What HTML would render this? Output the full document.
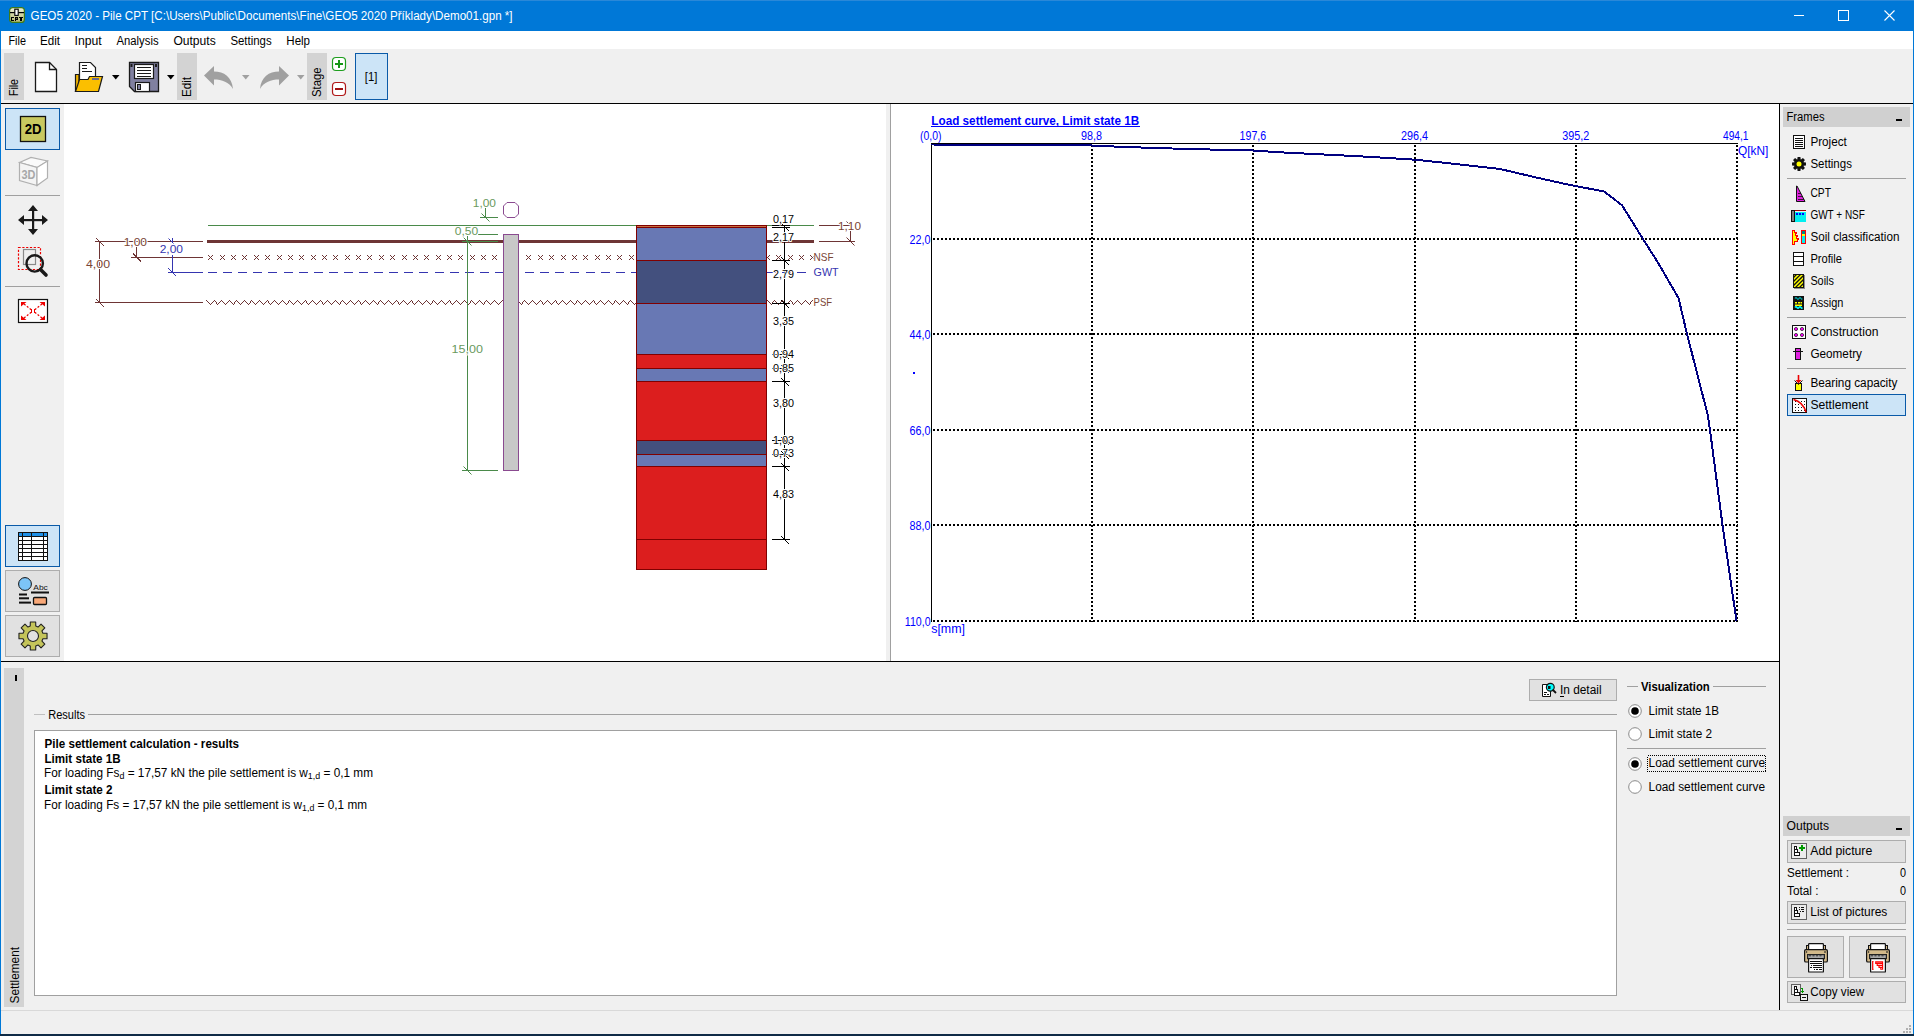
<!DOCTYPE html>
<html><head><meta charset="utf-8"><title>GEO5 2020 - Pile CPT</title>
<style>
html,body{margin:0;padding:0;width:1914px;height:1036px;overflow:hidden;background:#f0f0f0}
svg{display:block;font-family:"Liberation Sans",sans-serif}
</style></head><body>
<svg width="1914" height="1036" viewBox="0 0 1914 1036">
<rect x="0" y="0" width="1914" height="1036" fill="#f0f0f0" />
<rect x="0" y="0" width="1914" height="31" fill="#0078d7" />
<rect x="0" y="0" width="1914" height="1" fill="#2a88d8" />
<defs><linearGradient id="ig" x1="0" y1="0" x2="0" y2="1"><stop offset="0" stop-color="#f0f0dc"/><stop offset="0.45" stop-color="#d4d6a4"/><stop offset="1" stop-color="#b4b872"/></linearGradient></defs>
<g transform="translate(9,7)"><rect x="0.6" y="0.6" width="14.8" height="14.8" rx="3" fill="url(#ig)" stroke="#3e7a1a" stroke-width="1.2"/><rect x="1" y="5" width="14" height="1.2" fill="#000"/><rect x="5.8" y="2.2" width="3.4" height="6.2" fill="#fff" stroke="#000" stroke-width="1.1"/><path d="M2 10h3v1.3h-1.8v1.4h1.8v1.3h-3z M6 10h3v2.6h-1.7v1.4h-1.3z M10 10h4v1.3h-1.3v2.7h-1.4v-2.7h-1.3z" fill="#000" shape-rendering="crispEdges"/><rect x="7.3" y="11" width="0.8" height="0.8" fill="#c8cb8c"/></g>
<text x="30.60" y="20" font-size="12" font-weight="normal" fill="#fff" textLength="482.00" lengthAdjust="spacingAndGlyphs" >GEO5 2020 - Pile CPT [C:\Users\Public\Documents\Fine\GEO5 2020 Příklady\Demo01.gpn *]</text>
<rect x="1794" y="15" width="10" height="1" fill="#fff" />
<rect x="1838.5" y="10.5" width="10" height="10" fill="none" stroke="#fff"/>
<path d="M1884.5 10.5 L1894.5 20.5 M1894.5 10.5 L1884.5 20.5" stroke="#fff" stroke-width="1.1" fill="none"/>
<rect x="0" y="31" width="1" height="1003" fill="#0078d7" />
<rect x="1913" y="31" width="1" height="1003" fill="#0078d7" />
<rect x="0" y="1034" width="1914" height="2" fill="#0f2b46" />
<rect x="1" y="31" width="1912" height="18" fill="#fff" />
<text x="8.50" y="45" font-size="12" font-weight="normal" fill="#000" textLength="17.46" lengthAdjust="spacingAndGlyphs" >File</text>
<text x="40.00" y="45" font-size="12" font-weight="normal" fill="#000" textLength="20.05" lengthAdjust="spacingAndGlyphs" >Edit</text>
<text x="74.50" y="45" font-size="12" font-weight="normal" fill="#000" textLength="27.24" lengthAdjust="spacingAndGlyphs" >Input</text>
<text x="116.50" y="45" font-size="12" font-weight="normal" fill="#000" textLength="42.06" lengthAdjust="spacingAndGlyphs" >Analysis</text>
<text x="173.40" y="45" font-size="12" font-weight="normal" fill="#000" textLength="42.32" lengthAdjust="spacingAndGlyphs" >Outputs</text>
<text x="230.40" y="45" font-size="12" font-weight="normal" fill="#000" textLength="41.29" lengthAdjust="spacingAndGlyphs" >Settings</text>
<text x="286.30" y="45" font-size="12" font-weight="normal" fill="#000" textLength="23.75" lengthAdjust="spacingAndGlyphs" >Help</text>
<rect x="4" y="53" width="20" height="47" fill="#d3d3d3" />
<text transform="translate(18,96) rotate(-90)" x="0.00" y="0" font-size="12" fill="#000" textLength="16.97" lengthAdjust="spacingAndGlyphs">File</text>
<rect x="177" y="53" width="20" height="47" fill="#d3d3d3" />
<text transform="translate(191,97) rotate(-90)" x="0.00" y="0" font-size="12" fill="#000" textLength="20.05" lengthAdjust="spacingAndGlyphs">Edit</text>
<rect x="307" y="53" width="20" height="47" fill="#d3d3d3" />
<text transform="translate(321,97) rotate(-90)" x="0.00" y="0" font-size="12" fill="#000" textLength="29.49" lengthAdjust="spacingAndGlyphs">Stage</text>
<rect x="1" y="103" width="1912" height="1" fill="#000" />
<path d="M35.5 62.5 H49.5 L56.5 69.5 V91.5 H35.5 Z" fill="#fff" stroke="#1a1a1a" stroke-width="1.3"/><path d="M49.5 62.5 V69.5 H56.5" fill="none" stroke="#1a1a1a" stroke-width="1.3"/>
<g><path d="M75.5 74.5 H79 V91.5 H75.5 Z" fill="#f0b400" stroke="#1a1a1a" stroke-width="1.2"/><path d="M79.5 62.5 H90.5 L95.5 67.5 V80 H79.5 Z" fill="#fff" stroke="#1a1a1a" stroke-width="1.2"/><path d="M82 65.5 H87 M82 68.5 H87 M82 71.5 H92" stroke="#1a1a1a" stroke-width="1"/><path d="M75.5 91.5 L79.5 79.5 H88 L89.5 76.5 H102.5 L98.5 91.5 Z" fill="#fbbf00" stroke="#1a1a1a" stroke-width="1.2"/><rect x="92" y="78" width="7" height="2" fill="#6a6a8a"/></g>
<path d="M112 75 H119.5 L115.75 79.5 Z" fill="#000"/>
<path d="M129.5 62.5 H158.5 V91.5 H134.5 L129.5 86.5 Z" fill="#8080a0" stroke="#1a1a1a" stroke-width="1.3"/><rect x="134.5" y="64.5" width="19" height="14" fill="#fff" stroke="#1a1a1a" stroke-width="1.2"/><path d="M137 67.5 H151 M137 70.5 H151 M137 73.5 H151 M137 76.5 H151" stroke="#1a1a1a" stroke-width="1"/><rect x="135.5" y="82.5" width="14" height="9" fill="#fff" stroke="#1a1a1a" stroke-width="1.2"/><rect x="137.5" y="84.5" width="3" height="5" fill="#8080a0" stroke="#1a1a1a" stroke-width="1"/><rect x="130.5" y="64" width="2" height="3" fill="#1a1a1a"/><rect x="155" y="64" width="2" height="3" fill="#1a1a1a"/>
<path d="M167 75 H174.5 L170.75 79.5 Z" fill="#000"/>
<path d="M204 75.5 L214 66 V71.5 C224 71.5 232 77 233 89 C229 82 222 79.5 214 79.5 V85.5 Z" fill="#a0a0a0"/>
<path d="M242 75 H249.5 L245.75 79.5 Z" fill="#a0a0a0"/>
<path d="M289 75.5 L279 66 V71.5 C269 71.5 261 77 260 89 C264 82 271 79.5 279 79.5 V85.5 Z" fill="#a0a0a0"/>
<path d="M297 75 H304.5 L300.75 79.5 Z" fill="#a0a0a0"/>
<rect x="332.5" y="57.5" width="13" height="13" rx="3.5" fill="#fff" stroke="#1e9e1e" stroke-width="1.2"/><path d="M339 60 V68 M335 64 H343" stroke="#149614" stroke-width="2"/>
<rect x="332.5" y="82.5" width="13" height="13" rx="3.5" fill="#fff" stroke="#b01818" stroke-width="1.2"/><path d="M335 89 H343" stroke="#a01010" stroke-width="2"/>
<rect x="355.5" y="53.5" width="32" height="46" fill="#cce4f7" stroke="#0a5aa8" stroke-width="1" />
<text x="364.80" y="81" font-size="12" font-weight="normal" fill="#000" textLength="12.57" lengthAdjust="spacingAndGlyphs" >[1]</text>
<rect x="64" y="104" width="822" height="557" fill="#fff" />
<rect x="886" y="105" width="4" height="556" fill="#f0f0f0" />
<rect x="890" y="104" width="1" height="557" fill="#a0a0a0" />
<rect x="891" y="104" width="888" height="557" fill="#fff" />
<rect x="1779" y="104" width="1" height="906" fill="#000" />
<rect x="1" y="661" width="1778" height="1" fill="#000" />
<rect x="5.5" y="108.5" width="54" height="41" fill="#cce4f7" stroke="#0a5aa8" stroke-width="1" />
<rect x="20.5" y="116.5" width="25" height="25" fill="#c9c960" stroke="#111" stroke-width="1.3"/>
<text x="24.80" y="134" font-size="14" font-weight="bold" fill="#000" textLength="16.82" lengthAdjust="spacingAndGlyphs" >2D</text>
<g fill="none" stroke="#b0b0b0" stroke-width="1.2"><path d="M19.5 162.5 L31 157.5 L47.5 161 L37.5 167.5 Z" fill="#fafafa"/><path d="M19.5 162.5 V180.5 L37 185.5 V167.5 Z" fill="#f4f4f4"/><path d="M37 167.5 L47.5 161 V178 L37 185.5 Z" fill="#fff"/></g>
<text x="21.50" y="179" font-size="12" font-weight="bold" fill="#a8a8a8" textLength="13.97" lengthAdjust="spacingAndGlyphs" >3D</text>
<rect x="5" y="195" width="55" height="1" fill="#a0a0a0" />
<g fill="#1a1a1a"><path d="M33 205 L28 211 H38 Z M33 235 L28 229 H38 Z M18 220 L24 215 V225 Z M48 220 L42 215 V225 Z"/><rect x="32" y="210" width="2.2" height="20"/><rect x="23" y="219" width="20" height="2.2"/></g>
<rect x="18.5" y="247.5" width="22" height="22" fill="none" stroke="#e00" stroke-width="1.2" stroke-dasharray="2.2,1.6"/><rect x="23.5" y="249.5" width="12" height="15" fill="none" stroke="#8a8a8a" stroke-width="1.2"/><circle cx="34.7" cy="263.4" r="8.2" fill="none" stroke="#1a1a1a" stroke-width="2.4"/><path d="M40.5 269.5 L46 275" stroke="#1a1a1a" stroke-width="3.6" stroke-linecap="round"/>
<rect x="5" y="286" width="55" height="1" fill="#a0a0a0" />
<rect x="18.5" y="299.5" width="29" height="23" fill="#fff" stroke="#111" stroke-width="1.2"/><path d="M24 304 L31 309.5 M42 304 L35 309.5 M24 318 L31 312.5 M42 318 L35 312.5" stroke="#e00" stroke-width="1.2" stroke-dasharray="2,1.6"/><path d="M21 302 L26.5 302 L21 306.5 Z M45 302 L39.5 302 L45 306.5 Z M21 320 L26.5 320 L21 315.5 Z M45 320 L39.5 320 L45 315.5 Z" fill="#e00"/><path d="M31.5 309 V313 M34.5 309 V313 M30.5 309.5 H32 M30.5 312.5 H32 M34 309.5 H35.5 M34 312.5 H35.5" stroke="#e00" stroke-width="1"/>
<rect x="5.5" y="525.5" width="54" height="41" fill="#cce4f7" stroke="#0a5aa8" stroke-width="1" />
<rect x="18.5" y="532.5" width="29" height="28" fill="#fff" stroke="#111" stroke-width="1"/><rect x="19" y="533" width="28" height="3" fill="#1e90e8"/>
<path d="M19 536.5 H47" stroke="#111" stroke-width="1"/>
<path d="M19 540.5 H47" stroke="#111" stroke-width="1"/>
<path d="M19 544.5 H47" stroke="#111" stroke-width="1"/>
<path d="M19 548.5 H47" stroke="#111" stroke-width="1"/>
<path d="M19 552.5 H47" stroke="#111" stroke-width="1"/>
<path d="M19 556.5 H47" stroke="#111" stroke-width="1"/>
<path d="M22.5 533 V560 M31.5 533 V560 M43.5 533 V560" stroke="#111" stroke-width="1"/>
<rect x="5.5" y="570.5" width="54" height="41" fill="#e1e1e1" stroke="#adadad" stroke-width="1" />
<circle cx="25" cy="584" r="6.4" fill="#7cc4f8" stroke="#111" stroke-width="1"/><text x="33.3" y="589.5" font-size="8" fill="#111" textLength="14.5" lengthAdjust="spacingAndGlyphs">Abc</text><rect x="31" y="591.5" width="18" height="2" fill="#111"/><rect x="19" y="593.5" width="8" height="2" fill="#111"/><rect x="19" y="597.3" width="10" height="2" fill="#111"/><rect x="19" y="601.6" width="12" height="2" fill="#111"/><rect x="33.5" y="597.5" width="13" height="7" rx="1" fill="#f8a878" stroke="#111" stroke-width="1.3"/>
<rect x="5.5" y="615.5" width="54" height="41" fill="#e1e1e1" stroke="#adadad" stroke-width="1" />
<polygon points="42.93,633.25 47.04,633.30 47.04,638.70 42.93,638.75 41.96,641.08 44.84,644.02 41.02,647.84 38.08,644.96 35.75,645.93 35.70,650.04 30.30,650.04 30.25,645.93 27.92,644.96 24.98,647.84 21.16,644.02 24.04,641.08 23.07,638.75 18.96,638.70 18.96,633.30 23.07,633.25 24.04,630.92 21.16,627.98 24.98,624.16 27.92,627.04 30.25,626.07 30.30,621.96 35.70,621.96 35.75,626.07 38.08,627.04 41.02,624.16 44.84,627.98 41.96,630.92" fill="#c4c45a" stroke="#222" stroke-width="1.1" stroke-linejoin="round"/><circle cx="33" cy="636" r="5.5" fill="#e1e1e1" stroke="#222" stroke-width="1.1"/>
<g shape-rendering="crispEdges">
<rect x="95" y="241" width="108" height="1" fill="#6e3535" />
<rect x="131" y="257" width="72" height="1" fill="#6e3535" />
<rect x="168" y="272" width="35" height="1" fill="#3535b0" />
<rect x="95" y="302" width="108" height="1" fill="#6e3535" />
<rect x="99" y="241" width="1" height="62" fill="#6e3535" />
<rect x="136" y="247" width="1" height="11" fill="#6e3535" />
<rect x="172" y="255" width="1" height="18" fill="#3535b0" />
<rect x="172" y="238" width="1" height="5" fill="#3535b0" />
</g>
<path d="M96.0 238.0 L104.0 246.0" stroke="#6e3535" stroke-width="1" fill="none" shape-rendering="crispEdges"/>
<path d="M96.0 299.0 L104.0 307.0" stroke="#6e3535" stroke-width="1" fill="none" shape-rendering="crispEdges"/>
<path d="M133.0 253.5 L141.0 261.5" stroke="#6e3535" stroke-width="1" fill="none" shape-rendering="crispEdges"/>
<path d="M168.5 268.5 L176.5 276.5" stroke="#3535b0" stroke-width="1" fill="none" shape-rendering="crispEdges"/>
<path d="M168.5 238.5 L173.5 243.5" stroke="#3535b0" stroke-width="1"/>
<text x="86.00" y="268" font-size="11.5" font-weight="normal" fill="#7a4535" textLength="24.01" lengthAdjust="spacingAndGlyphs" stroke="#fff" stroke-width="2" paint-order="stroke" stroke-linejoin="round">4,00</text>
<text x="123.70" y="245.6" font-size="11.5" font-weight="normal" fill="#7a4535" textLength="23.31" lengthAdjust="spacingAndGlyphs" stroke="#fff" stroke-width="2" paint-order="stroke" stroke-linejoin="round">1,00</text>
<text x="159.70" y="253.4" font-size="11.5" font-weight="normal" fill="#3535b0" textLength="23.31" lengthAdjust="spacingAndGlyphs" stroke="#fff" stroke-width="2" paint-order="stroke" stroke-linejoin="round">2,00</text>
<g shape-rendering="crispEdges">
<rect x="208" y="225" width="606" height="1" fill="#4a8a4a" />
</g>
<path d="M208 255h1v1h-1z M212 255h1v1h-1z M209 256h1v1h-1z M211 256h1v1h-1z M210 257h1v1h-1z M209 258h1v1h-1z M211 258h1v1h-1z M208 259h1v1h-1z M212 259h1v1h-1z M220 255h1v1h-1z M224 255h1v1h-1z M221 256h1v1h-1z M223 256h1v1h-1z M222 257h1v1h-1z M221 258h1v1h-1z M223 258h1v1h-1z M220 259h1v1h-1z M224 259h1v1h-1z M231 255h1v1h-1z M235 255h1v1h-1z M232 256h1v1h-1z M234 256h1v1h-1z M233 257h1v1h-1z M232 258h1v1h-1z M234 258h1v1h-1z M231 259h1v1h-1z M235 259h1v1h-1z M242 255h1v1h-1z M246 255h1v1h-1z M243 256h1v1h-1z M245 256h1v1h-1z M244 257h1v1h-1z M243 258h1v1h-1z M245 258h1v1h-1z M242 259h1v1h-1z M246 259h1v1h-1z M254 255h1v1h-1z M258 255h1v1h-1z M255 256h1v1h-1z M257 256h1v1h-1z M256 257h1v1h-1z M255 258h1v1h-1z M257 258h1v1h-1z M254 259h1v1h-1z M258 259h1v1h-1z M265 255h1v1h-1z M269 255h1v1h-1z M266 256h1v1h-1z M268 256h1v1h-1z M267 257h1v1h-1z M266 258h1v1h-1z M268 258h1v1h-1z M265 259h1v1h-1z M269 259h1v1h-1z M277 255h1v1h-1z M281 255h1v1h-1z M278 256h1v1h-1z M280 256h1v1h-1z M279 257h1v1h-1z M278 258h1v1h-1z M280 258h1v1h-1z M277 259h1v1h-1z M281 259h1v1h-1z M288 255h1v1h-1z M292 255h1v1h-1z M289 256h1v1h-1z M291 256h1v1h-1z M290 257h1v1h-1z M289 258h1v1h-1z M291 258h1v1h-1z M288 259h1v1h-1z M292 259h1v1h-1z M299 255h1v1h-1z M303 255h1v1h-1z M300 256h1v1h-1z M302 256h1v1h-1z M301 257h1v1h-1z M300 258h1v1h-1z M302 258h1v1h-1z M299 259h1v1h-1z M303 259h1v1h-1z M311 255h1v1h-1z M315 255h1v1h-1z M312 256h1v1h-1z M314 256h1v1h-1z M313 257h1v1h-1z M312 258h1v1h-1z M314 258h1v1h-1z M311 259h1v1h-1z M315 259h1v1h-1z M322 255h1v1h-1z M326 255h1v1h-1z M323 256h1v1h-1z M325 256h1v1h-1z M324 257h1v1h-1z M323 258h1v1h-1z M325 258h1v1h-1z M322 259h1v1h-1z M326 259h1v1h-1z M333 255h1v1h-1z M337 255h1v1h-1z M334 256h1v1h-1z M336 256h1v1h-1z M335 257h1v1h-1z M334 258h1v1h-1z M336 258h1v1h-1z M333 259h1v1h-1z M337 259h1v1h-1z M345 255h1v1h-1z M349 255h1v1h-1z M346 256h1v1h-1z M348 256h1v1h-1z M347 257h1v1h-1z M346 258h1v1h-1z M348 258h1v1h-1z M345 259h1v1h-1z M349 259h1v1h-1z M356 255h1v1h-1z M360 255h1v1h-1z M357 256h1v1h-1z M359 256h1v1h-1z M358 257h1v1h-1z M357 258h1v1h-1z M359 258h1v1h-1z M356 259h1v1h-1z M360 259h1v1h-1z M367 255h1v1h-1z M371 255h1v1h-1z M368 256h1v1h-1z M370 256h1v1h-1z M369 257h1v1h-1z M368 258h1v1h-1z M370 258h1v1h-1z M367 259h1v1h-1z M371 259h1v1h-1z M379 255h1v1h-1z M383 255h1v1h-1z M380 256h1v1h-1z M382 256h1v1h-1z M381 257h1v1h-1z M380 258h1v1h-1z M382 258h1v1h-1z M379 259h1v1h-1z M383 259h1v1h-1z M390 255h1v1h-1z M394 255h1v1h-1z M391 256h1v1h-1z M393 256h1v1h-1z M392 257h1v1h-1z M391 258h1v1h-1z M393 258h1v1h-1z M390 259h1v1h-1z M394 259h1v1h-1z M402 255h1v1h-1z M406 255h1v1h-1z M403 256h1v1h-1z M405 256h1v1h-1z M404 257h1v1h-1z M403 258h1v1h-1z M405 258h1v1h-1z M402 259h1v1h-1z M406 259h1v1h-1z M413 255h1v1h-1z M417 255h1v1h-1z M414 256h1v1h-1z M416 256h1v1h-1z M415 257h1v1h-1z M414 258h1v1h-1z M416 258h1v1h-1z M413 259h1v1h-1z M417 259h1v1h-1z M424 255h1v1h-1z M428 255h1v1h-1z M425 256h1v1h-1z M427 256h1v1h-1z M426 257h1v1h-1z M425 258h1v1h-1z M427 258h1v1h-1z M424 259h1v1h-1z M428 259h1v1h-1z M436 255h1v1h-1z M440 255h1v1h-1z M437 256h1v1h-1z M439 256h1v1h-1z M438 257h1v1h-1z M437 258h1v1h-1z M439 258h1v1h-1z M436 259h1v1h-1z M440 259h1v1h-1z M447 255h1v1h-1z M451 255h1v1h-1z M448 256h1v1h-1z M450 256h1v1h-1z M449 257h1v1h-1z M448 258h1v1h-1z M450 258h1v1h-1z M447 259h1v1h-1z M451 259h1v1h-1z M458 255h1v1h-1z M462 255h1v1h-1z M459 256h1v1h-1z M461 256h1v1h-1z M460 257h1v1h-1z M459 258h1v1h-1z M461 258h1v1h-1z M458 259h1v1h-1z M462 259h1v1h-1z M470 255h1v1h-1z M474 255h1v1h-1z M471 256h1v1h-1z M473 256h1v1h-1z M472 257h1v1h-1z M471 258h1v1h-1z M473 258h1v1h-1z M470 259h1v1h-1z M474 259h1v1h-1z M481 255h1v1h-1z M485 255h1v1h-1z M482 256h1v1h-1z M484 256h1v1h-1z M483 257h1v1h-1z M482 258h1v1h-1z M484 258h1v1h-1z M481 259h1v1h-1z M485 259h1v1h-1z M492 255h1v1h-1z M496 255h1v1h-1z M493 256h1v1h-1z M495 256h1v1h-1z M494 257h1v1h-1z M493 258h1v1h-1z M495 258h1v1h-1z M492 259h1v1h-1z M496 259h1v1h-1z M526 255h1v1h-1z M530 255h1v1h-1z M527 256h1v1h-1z M529 256h1v1h-1z M528 257h1v1h-1z M527 258h1v1h-1z M529 258h1v1h-1z M526 259h1v1h-1z M530 259h1v1h-1z M538 255h1v1h-1z M542 255h1v1h-1z M539 256h1v1h-1z M541 256h1v1h-1z M540 257h1v1h-1z M539 258h1v1h-1z M541 258h1v1h-1z M538 259h1v1h-1z M542 259h1v1h-1z M549 255h1v1h-1z M553 255h1v1h-1z M550 256h1v1h-1z M552 256h1v1h-1z M551 257h1v1h-1z M550 258h1v1h-1z M552 258h1v1h-1z M549 259h1v1h-1z M553 259h1v1h-1z M561 255h1v1h-1z M565 255h1v1h-1z M562 256h1v1h-1z M564 256h1v1h-1z M563 257h1v1h-1z M562 258h1v1h-1z M564 258h1v1h-1z M561 259h1v1h-1z M565 259h1v1h-1z M572 255h1v1h-1z M576 255h1v1h-1z M573 256h1v1h-1z M575 256h1v1h-1z M574 257h1v1h-1z M573 258h1v1h-1z M575 258h1v1h-1z M572 259h1v1h-1z M576 259h1v1h-1z M583 255h1v1h-1z M587 255h1v1h-1z M584 256h1v1h-1z M586 256h1v1h-1z M585 257h1v1h-1z M584 258h1v1h-1z M586 258h1v1h-1z M583 259h1v1h-1z M587 259h1v1h-1z M595 255h1v1h-1z M599 255h1v1h-1z M596 256h1v1h-1z M598 256h1v1h-1z M597 257h1v1h-1z M596 258h1v1h-1z M598 258h1v1h-1z M595 259h1v1h-1z M599 259h1v1h-1z M606 255h1v1h-1z M610 255h1v1h-1z M607 256h1v1h-1z M609 256h1v1h-1z M608 257h1v1h-1z M607 258h1v1h-1z M609 258h1v1h-1z M606 259h1v1h-1z M610 259h1v1h-1z M617 255h1v1h-1z M621 255h1v1h-1z M618 256h1v1h-1z M620 256h1v1h-1z M619 257h1v1h-1z M618 258h1v1h-1z M620 258h1v1h-1z M617 259h1v1h-1z M621 259h1v1h-1z M629 255h1v1h-1z M633 255h1v1h-1z M630 256h1v1h-1z M632 256h1v1h-1z M631 257h1v1h-1z M630 258h1v1h-1z M632 258h1v1h-1z M629 259h1v1h-1z M633 259h1v1h-1z M640 255h1v1h-1z M644 255h1v1h-1z M641 256h1v1h-1z M643 256h1v1h-1z M642 257h1v1h-1z M641 258h1v1h-1z M643 258h1v1h-1z M640 259h1v1h-1z M644 259h1v1h-1z M651 255h1v1h-1z M655 255h1v1h-1z M652 256h1v1h-1z M654 256h1v1h-1z M653 257h1v1h-1z M652 258h1v1h-1z M654 258h1v1h-1z M651 259h1v1h-1z M655 259h1v1h-1z M663 255h1v1h-1z M667 255h1v1h-1z M664 256h1v1h-1z M666 256h1v1h-1z M665 257h1v1h-1z M664 258h1v1h-1z M666 258h1v1h-1z M663 259h1v1h-1z M667 259h1v1h-1z M674 255h1v1h-1z M678 255h1v1h-1z M675 256h1v1h-1z M677 256h1v1h-1z M676 257h1v1h-1z M675 258h1v1h-1z M677 258h1v1h-1z M674 259h1v1h-1z M678 259h1v1h-1z M686 255h1v1h-1z M690 255h1v1h-1z M687 256h1v1h-1z M689 256h1v1h-1z M688 257h1v1h-1z M687 258h1v1h-1z M689 258h1v1h-1z M686 259h1v1h-1z M690 259h1v1h-1z M697 255h1v1h-1z M701 255h1v1h-1z M698 256h1v1h-1z M700 256h1v1h-1z M699 257h1v1h-1z M698 258h1v1h-1z M700 258h1v1h-1z M697 259h1v1h-1z M701 259h1v1h-1z M708 255h1v1h-1z M712 255h1v1h-1z M709 256h1v1h-1z M711 256h1v1h-1z M710 257h1v1h-1z M709 258h1v1h-1z M711 258h1v1h-1z M708 259h1v1h-1z M712 259h1v1h-1z M720 255h1v1h-1z M724 255h1v1h-1z M721 256h1v1h-1z M723 256h1v1h-1z M722 257h1v1h-1z M721 258h1v1h-1z M723 258h1v1h-1z M720 259h1v1h-1z M724 259h1v1h-1z M731 255h1v1h-1z M735 255h1v1h-1z M732 256h1v1h-1z M734 256h1v1h-1z M733 257h1v1h-1z M732 258h1v1h-1z M734 258h1v1h-1z M731 259h1v1h-1z M735 259h1v1h-1z M742 255h1v1h-1z M746 255h1v1h-1z M743 256h1v1h-1z M745 256h1v1h-1z M744 257h1v1h-1z M743 258h1v1h-1z M745 258h1v1h-1z M742 259h1v1h-1z M746 259h1v1h-1z M754 255h1v1h-1z M758 255h1v1h-1z M755 256h1v1h-1z M757 256h1v1h-1z M756 257h1v1h-1z M755 258h1v1h-1z M757 258h1v1h-1z M754 259h1v1h-1z M758 259h1v1h-1z M765 255h1v1h-1z M769 255h1v1h-1z M766 256h1v1h-1z M768 256h1v1h-1z M767 257h1v1h-1z M766 258h1v1h-1z M768 258h1v1h-1z M765 259h1v1h-1z M769 259h1v1h-1z M776 255h1v1h-1z M780 255h1v1h-1z M777 256h1v1h-1z M779 256h1v1h-1z M778 257h1v1h-1z M777 258h1v1h-1z M779 258h1v1h-1z M776 259h1v1h-1z M780 259h1v1h-1z M788 255h1v1h-1z M792 255h1v1h-1z M789 256h1v1h-1z M791 256h1v1h-1z M790 257h1v1h-1z M789 258h1v1h-1z M791 258h1v1h-1z M788 259h1v1h-1z M792 259h1v1h-1z M799 255h1v1h-1z M803 255h1v1h-1z M800 256h1v1h-1z M802 256h1v1h-1z M801 257h1v1h-1z M800 258h1v1h-1z M802 258h1v1h-1z M799 259h1v1h-1z M803 259h1v1h-1z M810 255h1v1h-1z M814 255h1v1h-1z M811 256h1v1h-1z M813 256h1v1h-1z M812 257h1v1h-1z M811 258h1v1h-1z M813 258h1v1h-1z M810 259h1v1h-1z M814 259h1v1h-1z" fill="#6e3535" shape-rendering="crispEdges"/>
<path d="M208 272.5 H217 M223.1 272.5 H232.1 M238.2 272.5 H247.2 M253.29999999999998 272.5 H262.29999999999995 M268.4 272.5 H277.4 M283.5 272.5 H292.5 M298.6 272.5 H307.6 M313.70000000000005 272.5 H322.70000000000005 M328.80000000000007 272.5 H337.80000000000007 M343.9000000000001 272.5 H352.9000000000001 M359.0000000000001 272.5 H368.0000000000001 M374.10000000000014 272.5 H383.10000000000014 M389.20000000000016 272.5 H398.20000000000016 M404.3000000000002 272.5 H413.3000000000002 M419.4000000000002 272.5 H428.4000000000002 M434.5000000000002 272.5 H443.5000000000002 M449.60000000000025 272.5 H458.60000000000025 M464.7000000000003 272.5 H473.7000000000003 M479.8000000000003 272.5 H488.8000000000003 M494.9000000000003 272.5 H503.9000000000003 M510.00000000000034 272.5 H519.0000000000003 M525.1000000000004 272.5 H534.1000000000004 M540.2000000000004 272.5 H549.2000000000004 M555.3000000000004 272.5 H564.3000000000004 M570.4000000000004 272.5 H579.4000000000004 M585.5000000000005 272.5 H594.5000000000005 M600.6000000000005 272.5 H609.6000000000005 M615.7000000000005 272.5 H624.7000000000005 M630.8000000000005 272.5 H639.8000000000005 M645.9000000000005 272.5 H654.9000000000005 M661.0000000000006 272.5 H670.0000000000006 M676.1000000000006 272.5 H685.1000000000006 M691.2000000000006 272.5 H700.2000000000006 M706.3000000000006 272.5 H715.3000000000006 M721.4000000000007 272.5 H730.4000000000007 M736.5000000000007 272.5 H745.5000000000007 M751.6000000000007 272.5 H760.6000000000007 M766.7000000000007 272.5 H775.7000000000007 M781.8000000000008 272.5 H790.8000000000008 M796.9000000000008 272.5 H805.9000000000008" stroke="#3535b0" stroke-width="1.3" fill="none" shape-rendering="crispEdges"/>
<path d="M206 300h1v1h-1z M207 301h1v1h-1z M208 302h1v1h-1z M209 303h1v1h-1z M210 304h1v1h-1z M211 303h1v1h-1z M212 302h1v1h-1z M213 301h1v1h-1z M214 300h1v1h-1z M215 301h1v1h-1z M216 302h1v1h-1z M216 303h1v1h-1z M217 304h1v1h-1z M218 303h1v1h-1z M219 302h1v1h-1z M220 301h1v1h-1z M221 300h1v1h-1z M222 301h1v1h-1z M223 302h1v1h-1z M224 303h1v1h-1z M225 304h1v1h-1z M226 303h1v1h-1z M227 302h1v1h-1z M228 301h1v1h-1z M229 300h1v1h-1z M230 301h1v1h-1z M231 302h1v1h-1z M232 303h1v1h-1z M233 304h1v1h-1z M234 302h1v1h-1z M234 303h1v1h-1z M235 301h1v1h-1z M236 300h1v1h-1z M237 301h1v1h-1z M238 302h1v1h-1z M239 303h1v1h-1z M240 304h1v1h-1z M241 303h1v1h-1z M242 302h1v1h-1z M243 301h1v1h-1z M244 300h1v1h-1z M245 301h1v1h-1z M246 302h1v1h-1z M247 303h1v1h-1z M248 304h1v1h-1z M249 303h1v1h-1z M250 301h1v1h-1z M250 302h1v1h-1z M251 300h1v1h-1z M252 301h1v1h-1z M253 302h1v1h-1z M254 303h1v1h-1z M255 304h1v1h-1z M256 303h1v1h-1z M257 302h1v1h-1z M258 301h1v1h-1z M259 300h1v1h-1z M260 301h1v1h-1z M261 302h1v1h-1z M262 303h1v1h-1z M263 304h1v1h-1z M264 303h1v1h-1z M265 302h1v1h-1z M266 301h1v1h-1z M267 300h1v1h-1z M268 301h1v1h-1z M268 302h1v1h-1z M269 303h1v1h-1z M270 304h1v1h-1z M271 303h1v1h-1z M272 302h1v1h-1z M273 301h1v1h-1z M274 300h1v1h-1z M275 301h1v1h-1z M276 302h1v1h-1z M277 303h1v1h-1z M278 304h1v1h-1z M279 303h1v1h-1z M280 302h1v1h-1z M281 301h1v1h-1z M282 300h1v1h-1z M283 301h1v1h-1z M284 302h1v1h-1z M285 303h1v1h-1z M286 304h1v1h-1z M287 303h1v1h-1z M288 301h1v1h-1z M288 302h1v1h-1z M289 300h1v1h-1z M290 301h1v1h-1z M291 302h1v1h-1z M292 303h1v1h-1z M293 304h1v1h-1z M294 303h1v1h-1z M295 302h1v1h-1z M296 301h1v1h-1z M297 300h1v1h-1z M298 301h1v1h-1z M299 302h1v1h-1z M300 303h1v1h-1z M301 304h1v1h-1z M302 303h1v1h-1z M303 302h1v1h-1z M304 301h1v1h-1z M305 300h1v1h-1z M306 301h1v1h-1z M306 302h1v1h-1z M307 303h1v1h-1z M308 304h1v1h-1z M309 303h1v1h-1z M310 302h1v1h-1z M311 301h1v1h-1z M312 300h1v1h-1z M313 301h1v1h-1z M314 302h1v1h-1z M315 303h1v1h-1z M316 304h1v1h-1z M317 303h1v1h-1z M318 302h1v1h-1z M319 301h1v1h-1z M320 300h1v1h-1z M321 301h1v1h-1z M322 302h1v1h-1z M322 303h1v1h-1z M323 304h1v1h-1z M324 303h1v1h-1z M325 302h1v1h-1z M326 301h1v1h-1z M327 300h1v1h-1z M328 301h1v1h-1z M329 302h1v1h-1z M330 303h1v1h-1z M331 304h1v1h-1z M332 303h1v1h-1z M333 302h1v1h-1z M334 301h1v1h-1z M335 300h1v1h-1z M336 301h1v1h-1z M337 302h1v1h-1z M338 303h1v1h-1z M339 304h1v1h-1z M340 302h1v1h-1z M340 303h1v1h-1z M341 301h1v1h-1z M342 300h1v1h-1z M343 301h1v1h-1z M344 302h1v1h-1z M345 303h1v1h-1z M346 304h1v1h-1z M347 303h1v1h-1z M348 302h1v1h-1z M349 301h1v1h-1z M350 300h1v1h-1z M351 301h1v1h-1z M352 302h1v1h-1z M353 303h1v1h-1z M354 304h1v1h-1z M355 303h1v1h-1z M356 302h1v1h-1z M357 301h1v1h-1z M358 300h1v1h-1z M359 301h1v1h-1z M360 302h1v1h-1z M360 303h1v1h-1z M361 304h1v1h-1z M362 303h1v1h-1z M363 302h1v1h-1z M364 301h1v1h-1z M365 300h1v1h-1z M366 301h1v1h-1z M367 302h1v1h-1z M368 303h1v1h-1z M369 304h1v1h-1z M370 303h1v1h-1z M371 302h1v1h-1z M372 301h1v1h-1z M373 300h1v1h-1z M374 301h1v1h-1z M375 302h1v1h-1z M376 303h1v1h-1z M377 304h1v1h-1z M378 302h1v1h-1z M378 303h1v1h-1z M379 301h1v1h-1z M380 300h1v1h-1z M381 301h1v1h-1z M382 302h1v1h-1z M383 303h1v1h-1z M384 304h1v1h-1z M385 303h1v1h-1z M386 302h1v1h-1z M387 301h1v1h-1z M388 300h1v1h-1z M389 301h1v1h-1z M390 302h1v1h-1z M391 303h1v1h-1z M392 304h1v1h-1z M393 303h1v1h-1z M394 302h1v1h-1z M395 301h1v1h-1z M396 300h1v1h-1z M397 301h1v1h-1z M398 302h1v1h-1z M398 303h1v1h-1z M399 304h1v1h-1z M400 303h1v1h-1z M401 302h1v1h-1z M402 301h1v1h-1z M403 300h1v1h-1z M404 301h1v1h-1z M405 302h1v1h-1z M406 303h1v1h-1z M407 304h1v1h-1z M408 303h1v1h-1z M409 302h1v1h-1z M410 301h1v1h-1z M411 300h1v1h-1z M412 301h1v1h-1z M412 302h1v1h-1z M413 303h1v1h-1z M414 304h1v1h-1z M415 303h1v1h-1z M416 302h1v1h-1z M417 301h1v1h-1z M418 300h1v1h-1z M419 301h1v1h-1z M420 302h1v1h-1z M421 303h1v1h-1z M422 304h1v1h-1z M423 303h1v1h-1z M424 302h1v1h-1z M425 301h1v1h-1z M426 300h1v1h-1z M427 301h1v1h-1z M428 302h1v1h-1z M429 303h1v1h-1z M430 304h1v1h-1z M431 303h1v1h-1z M432 301h1v1h-1z M432 302h1v1h-1z M433 300h1v1h-1z M434 301h1v1h-1z M435 302h1v1h-1z M436 303h1v1h-1z M437 304h1v1h-1z M438 303h1v1h-1z M439 302h1v1h-1z M440 301h1v1h-1z M441 300h1v1h-1z M442 301h1v1h-1z M443 302h1v1h-1z M444 303h1v1h-1z M445 304h1v1h-1z M446 303h1v1h-1z M447 302h1v1h-1z M448 301h1v1h-1z M449 300h1v1h-1z M450 301h1v1h-1z M450 302h1v1h-1z M451 303h1v1h-1z M452 304h1v1h-1z M453 303h1v1h-1z M454 302h1v1h-1z M455 301h1v1h-1z M456 300h1v1h-1z M457 301h1v1h-1z M458 302h1v1h-1z M459 303h1v1h-1z M460 304h1v1h-1z M461 303h1v1h-1z M462 302h1v1h-1z M463 301h1v1h-1z M464 300h1v1h-1z M465 301h1v1h-1z M466 302h1v1h-1z M467 303h1v1h-1z M468 304h1v1h-1z M469 303h1v1h-1z M470 301h1v1h-1z M470 302h1v1h-1z M471 300h1v1h-1z M472 301h1v1h-1z M473 302h1v1h-1z M474 303h1v1h-1z M475 304h1v1h-1z M476 303h1v1h-1z M477 302h1v1h-1z M478 301h1v1h-1z M479 300h1v1h-1z M480 301h1v1h-1z M481 302h1v1h-1z M482 303h1v1h-1z M483 304h1v1h-1z M484 302h1v1h-1z M484 303h1v1h-1z M485 301h1v1h-1z M486 300h1v1h-1z M487 301h1v1h-1z M488 302h1v1h-1z M489 303h1v1h-1z M490 304h1v1h-1z M491 303h1v1h-1z M492 302h1v1h-1z M493 301h1v1h-1z M494 300h1v1h-1z M495 301h1v1h-1z M496 302h1v1h-1z M497 303h1v1h-1z M498 304h1v1h-1z M499 303h1v1h-1z M500 302h1v1h-1z M501 301h1v1h-1z M502 300h1v1h-1z M503 301h1v1h-1z M504 302h1v1h-1z M504 303h1v1h-1z M505 304h1v1h-1z M506 303h1v1h-1z M507 302h1v1h-1z M508 301h1v1h-1z M509 300h1v1h-1z M510 301h1v1h-1z M511 302h1v1h-1z M512 303h1v1h-1z M513 304h1v1h-1z M514 303h1v1h-1z M515 302h1v1h-1z M516 301h1v1h-1z M517 300h1v1h-1z M518 301h1v1h-1z M519 302h1v1h-1z M520 303h1v1h-1z M521 304h1v1h-1z M522 302h1v1h-1z M522 303h1v1h-1z M523 301h1v1h-1z M524 300h1v1h-1z M525 301h1v1h-1z M526 302h1v1h-1z M527 303h1v1h-1z M528 304h1v1h-1z M529 303h1v1h-1z M530 302h1v1h-1z M531 301h1v1h-1z M532 300h1v1h-1z M533 301h1v1h-1z M534 302h1v1h-1z M535 303h1v1h-1z M536 304h1v1h-1z M537 303h1v1h-1z M538 302h1v1h-1z M539 301h1v1h-1z M540 300h1v1h-1z M541 301h1v1h-1z M542 302h1v1h-1z M542 303h1v1h-1z M543 304h1v1h-1z M544 303h1v1h-1z M545 302h1v1h-1z M546 301h1v1h-1z M547 300h1v1h-1z M548 301h1v1h-1z M549 302h1v1h-1z M550 303h1v1h-1z M551 304h1v1h-1z M552 303h1v1h-1z M553 302h1v1h-1z M554 301h1v1h-1z M555 300h1v1h-1z M556 301h1v1h-1z M556 302h1v1h-1z M557 303h1v1h-1z M558 304h1v1h-1z M559 303h1v1h-1z M560 302h1v1h-1z M561 301h1v1h-1z M562 300h1v1h-1z M563 301h1v1h-1z M564 302h1v1h-1z M565 303h1v1h-1z M566 304h1v1h-1z M567 303h1v1h-1z M568 302h1v1h-1z M569 301h1v1h-1z M570 300h1v1h-1z M571 301h1v1h-1z M572 302h1v1h-1z M573 303h1v1h-1z M574 304h1v1h-1z M575 303h1v1h-1z M576 301h1v1h-1z M576 302h1v1h-1z M577 300h1v1h-1z M578 301h1v1h-1z M579 302h1v1h-1z M580 303h1v1h-1z M581 304h1v1h-1z M582 303h1v1h-1z M583 302h1v1h-1z M584 301h1v1h-1z M585 300h1v1h-1z M586 301h1v1h-1z M587 302h1v1h-1z M588 303h1v1h-1z M589 304h1v1h-1z M590 303h1v1h-1z M591 302h1v1h-1z M592 301h1v1h-1z M593 300h1v1h-1z M594 301h1v1h-1z M594 302h1v1h-1z M595 303h1v1h-1z M596 304h1v1h-1z M597 303h1v1h-1z M598 302h1v1h-1z M599 301h1v1h-1z M600 300h1v1h-1z M601 301h1v1h-1z M602 302h1v1h-1z M603 303h1v1h-1z M604 304h1v1h-1z M605 303h1v1h-1z M606 302h1v1h-1z M607 301h1v1h-1z M608 300h1v1h-1z M609 301h1v1h-1z M610 302h1v1h-1z M611 303h1v1h-1z M612 304h1v1h-1z M613 303h1v1h-1z M614 301h1v1h-1z M614 302h1v1h-1z M615 300h1v1h-1z M616 301h1v1h-1z M617 302h1v1h-1z M618 303h1v1h-1z M619 304h1v1h-1z M620 303h1v1h-1z M621 302h1v1h-1z M622 301h1v1h-1z M623 300h1v1h-1z M624 301h1v1h-1z M625 302h1v1h-1z M626 303h1v1h-1z M627 304h1v1h-1z M628 302h1v1h-1z M628 303h1v1h-1z M629 301h1v1h-1z M630 300h1v1h-1z M631 301h1v1h-1z M632 302h1v1h-1z M633 303h1v1h-1z M634 304h1v1h-1z M635 303h1v1h-1z M636 302h1v1h-1z M637 301h1v1h-1z M638 300h1v1h-1z M639 301h1v1h-1z M640 302h1v1h-1z M641 303h1v1h-1z M642 304h1v1h-1z M643 303h1v1h-1z M644 302h1v1h-1z M645 301h1v1h-1z M646 300h1v1h-1z M647 301h1v1h-1z M648 302h1v1h-1z M648 303h1v1h-1z M649 304h1v1h-1z M650 303h1v1h-1z M651 302h1v1h-1z M652 301h1v1h-1z M653 300h1v1h-1z M654 301h1v1h-1z M655 302h1v1h-1z M656 303h1v1h-1z M657 304h1v1h-1z M658 303h1v1h-1z M659 302h1v1h-1z M660 301h1v1h-1z M661 300h1v1h-1z M662 301h1v1h-1z M663 302h1v1h-1z M664 303h1v1h-1z M665 304h1v1h-1z M666 302h1v1h-1z M666 303h1v1h-1z M667 301h1v1h-1z M668 300h1v1h-1z M669 301h1v1h-1z M670 302h1v1h-1z M671 303h1v1h-1z M672 304h1v1h-1z M673 303h1v1h-1z M674 302h1v1h-1z M675 301h1v1h-1z M676 300h1v1h-1z M677 301h1v1h-1z M678 302h1v1h-1z M679 303h1v1h-1z M680 304h1v1h-1z M681 303h1v1h-1z M682 302h1v1h-1z M683 301h1v1h-1z M684 300h1v1h-1z M685 301h1v1h-1z M686 302h1v1h-1z M686 303h1v1h-1z M687 304h1v1h-1z M688 303h1v1h-1z M689 302h1v1h-1z M690 301h1v1h-1z M691 300h1v1h-1z M692 301h1v1h-1z M693 302h1v1h-1z M694 303h1v1h-1z M695 304h1v1h-1z M696 303h1v1h-1z M697 302h1v1h-1z M698 301h1v1h-1z M699 300h1v1h-1z M700 301h1v1h-1z M700 302h1v1h-1z M701 303h1v1h-1z M702 304h1v1h-1z M703 303h1v1h-1z M704 302h1v1h-1z M705 301h1v1h-1z M706 300h1v1h-1z M707 301h1v1h-1z M708 302h1v1h-1z M709 303h1v1h-1z M710 304h1v1h-1z M711 303h1v1h-1z M712 302h1v1h-1z M713 301h1v1h-1z M714 300h1v1h-1z M715 301h1v1h-1z M716 302h1v1h-1z M717 303h1v1h-1z M718 304h1v1h-1z M719 303h1v1h-1z M720 301h1v1h-1z M720 302h1v1h-1z M721 300h1v1h-1z M722 301h1v1h-1z M723 302h1v1h-1z M724 303h1v1h-1z M725 304h1v1h-1z M726 303h1v1h-1z M727 302h1v1h-1z M728 301h1v1h-1z M729 300h1v1h-1z M730 301h1v1h-1z M731 302h1v1h-1z M732 303h1v1h-1z M733 304h1v1h-1z M734 303h1v1h-1z M735 302h1v1h-1z M736 301h1v1h-1z M737 300h1v1h-1z M738 301h1v1h-1z M738 302h1v1h-1z M739 303h1v1h-1z M740 304h1v1h-1z M741 303h1v1h-1z M742 302h1v1h-1z M743 301h1v1h-1z M744 300h1v1h-1z M745 301h1v1h-1z M746 302h1v1h-1z M747 303h1v1h-1z M748 304h1v1h-1z M749 303h1v1h-1z M750 302h1v1h-1z M751 301h1v1h-1z M752 300h1v1h-1z M753 301h1v1h-1z M754 302h1v1h-1z M755 303h1v1h-1z M756 304h1v1h-1z M757 303h1v1h-1z M758 301h1v1h-1z M758 302h1v1h-1z M759 300h1v1h-1z M760 301h1v1h-1z M761 302h1v1h-1z M762 303h1v1h-1z M763 304h1v1h-1z M764 303h1v1h-1z M765 302h1v1h-1z M766 301h1v1h-1z M767 300h1v1h-1z M768 301h1v1h-1z M769 302h1v1h-1z M770 303h1v1h-1z M771 304h1v1h-1z M772 302h1v1h-1z M772 303h1v1h-1z M773 301h1v1h-1z M774 300h1v1h-1z M775 301h1v1h-1z M776 302h1v1h-1z M777 303h1v1h-1z M778 304h1v1h-1z M779 303h1v1h-1z M780 302h1v1h-1z M781 301h1v1h-1z M782 300h1v1h-1z M783 301h1v1h-1z M784 302h1v1h-1z M785 303h1v1h-1z M786 304h1v1h-1z M787 303h1v1h-1z M788 302h1v1h-1z M789 301h1v1h-1z M790 300h1v1h-1z M791 301h1v1h-1z M792 302h1v1h-1z M792 303h1v1h-1z M793 304h1v1h-1z M794 303h1v1h-1z M795 302h1v1h-1z M796 301h1v1h-1z M797 300h1v1h-1z M798 301h1v1h-1z M799 302h1v1h-1z M800 303h1v1h-1z M801 304h1v1h-1z M802 303h1v1h-1z M803 302h1v1h-1z M804 301h1v1h-1z M805 300h1v1h-1z M806 301h1v1h-1z M807 302h1v1h-1z M808 303h1v1h-1z M809 304h1v1h-1z M810 302h1v1h-1z M810 303h1v1h-1z M811 301h1v1h-1z M812 300h1v1h-1z" fill="#6e3535" shape-rendering="crispEdges"/>
<g shape-rendering="crispEdges">
<rect x="207" y="240" width="607" height="3" fill="#6e3535" />
</g>
<g shape-rendering="crispEdges">
<rect x="480" y="217" width="18" height="1" fill="#4a8a4a" />
<rect x="485" y="208" width="1" height="10" fill="#4a8a4a" />
<rect x="478" y="234" width="20" height="1" fill="#4a8a4a" />
<rect x="462" y="241" width="36" height="1" fill="#4a8a4a" />
<rect x="467" y="236" width="1" height="235" fill="#4a8a4a" />
<rect x="462" y="470" width="36" height="1" fill="#4a8a4a" />
</g>
<path d="M481.5 213.5 L489.5 221.5 M463.5 237.5 L471.5 245.5 M463.5 466.5 L471.5 474.5" stroke="#4a8a4a" stroke-width="1" fill="none"/>
<text x="472.80" y="207" font-size="11.5" font-weight="normal" fill="#6a9a60" textLength="23.21" lengthAdjust="spacingAndGlyphs" stroke="#fff" stroke-width="2" paint-order="stroke" stroke-linejoin="round">1,00</text>
<text x="454.70" y="234.8" font-size="11.5" font-weight="normal" fill="#6a9a60" textLength="23.51" lengthAdjust="spacingAndGlyphs" stroke="#fff" stroke-width="2" paint-order="stroke" stroke-linejoin="round">0,50</text>
<text x="451.60" y="352.7" font-size="11.5" font-weight="normal" fill="#6a9a60" textLength="31.33" lengthAdjust="spacingAndGlyphs" stroke="#fff" stroke-width="2" paint-order="stroke" stroke-linejoin="round">15,00</text>
<polygon points="507,202.5 515,202.5 518.5,206 518.5,214 515,217.5 507,217.5 503.5,214 503.5,206" fill="none" stroke="#8a4a90" stroke-width="1"/>
<rect x="503.5" y="234.5" width="15" height="236" fill="#c8c8c8" stroke="#8a4a90" stroke-width="1" shape-rendering="crispEdges"/>
<g shape-rendering="crispEdges">
<rect x="636" y="225" width="131" height="3" fill="#c87040" />
<rect x="636" y="228" width="131" height="32" fill="#6878b4" />
<rect x="636" y="260" width="131" height="43" fill="#43507e" />
<rect x="636" y="303" width="131" height="51" fill="#6878b4" />
<rect x="636" y="354" width="131" height="14" fill="#dc1e1e" />
<rect x="636" y="368" width="131" height="13" fill="#6878b4" />
<rect x="636" y="381" width="131" height="59" fill="#dc1e1e" />
<rect x="636" y="440" width="131" height="14" fill="#43507e" />
<rect x="636" y="454" width="131" height="12" fill="#6878b4" />
<rect x="636" y="466" width="131" height="73" fill="#dc1e1e" />
<rect x="636" y="539" width="131" height="31" fill="#dc1e1e" />
<rect x="636" y="227" width="131" height="1" fill="#800000" />
<rect x="636" y="260" width="131" height="1" fill="#800000" />
<rect x="636" y="303" width="131" height="1" fill="#800000" />
<rect x="636" y="354" width="131" height="1" fill="#800000" />
<rect x="636" y="368" width="131" height="1" fill="#800000" />
<rect x="636" y="381" width="131" height="1" fill="#800000" />
<rect x="636" y="440" width="131" height="1" fill="#800000" />
<rect x="636" y="454" width="131" height="1" fill="#800000" />
<rect x="636" y="466" width="131" height="1" fill="#800000" />
<rect x="636" y="539" width="131" height="1" fill="#800000" />
<rect x="636.5" y="225.5" width="130" height="344" fill="none" stroke="#800000" stroke-width="1"/>
<rect x="784" y="225" width="1" height="315" fill="#000" />
<rect x="772" y="225" width="18" height="1" fill="#000" />
<rect x="772" y="227" width="18" height="1" fill="#000" />
<rect x="772" y="260" width="18" height="1" fill="#000" />
<rect x="772" y="303" width="18" height="1" fill="#000" />
<rect x="772" y="354" width="18" height="1" fill="#000" />
<rect x="772" y="368" width="18" height="1" fill="#000" />
<rect x="772" y="381" width="18" height="1" fill="#000" />
<rect x="772" y="440" width="18" height="1" fill="#000" />
<rect x="772" y="454" width="18" height="1" fill="#000" />
<rect x="772" y="466" width="18" height="1" fill="#000" />
<rect x="772" y="539" width="18" height="1" fill="#000" />
</g>
<path d="M781.0 223.0 L789.0 231.0" stroke="#000" stroke-width="1" fill="none" shape-rendering="crispEdges"/>
<path d="M781.0 257.0 L789.0 265.0" stroke="#000" stroke-width="1" fill="none" shape-rendering="crispEdges"/>
<path d="M781.0 300.0 L789.0 308.0" stroke="#000" stroke-width="1" fill="none" shape-rendering="crispEdges"/>
<path d="M781.0 351.0 L789.0 359.0" stroke="#000" stroke-width="1" fill="none" shape-rendering="crispEdges"/>
<path d="M781.0 365.0 L789.0 373.0" stroke="#000" stroke-width="1" fill="none" shape-rendering="crispEdges"/>
<path d="M781.0 378.0 L789.0 386.0" stroke="#000" stroke-width="1" fill="none" shape-rendering="crispEdges"/>
<path d="M781.0 437.0 L789.0 445.0" stroke="#000" stroke-width="1" fill="none" shape-rendering="crispEdges"/>
<path d="M781.0 451.0 L789.0 459.0" stroke="#000" stroke-width="1" fill="none" shape-rendering="crispEdges"/>
<path d="M781.0 463.0 L789.0 471.0" stroke="#000" stroke-width="1" fill="none" shape-rendering="crispEdges"/>
<path d="M781.0 536.0 L789.0 544.0" stroke="#000" stroke-width="1" fill="none" shape-rendering="crispEdges"/>
<text x="773.00" y="222.5" font-size="11.5" font-weight="normal" fill="#000" textLength="21.01" lengthAdjust="spacingAndGlyphs" stroke="#fff" stroke-width="2" paint-order="stroke" stroke-linejoin="round">0,17</text>
<text x="773.00" y="240.6" font-size="11.5" font-weight="normal" fill="#000" textLength="21.01" lengthAdjust="spacingAndGlyphs" stroke="#fff" stroke-width="2" paint-order="stroke" stroke-linejoin="round">2,17</text>
<text x="773.00" y="278.3" font-size="11.5" font-weight="normal" fill="#000" textLength="21.01" lengthAdjust="spacingAndGlyphs" stroke="#fff" stroke-width="2" paint-order="stroke" stroke-linejoin="round">2,79</text>
<text x="773.00" y="325" font-size="11.5" font-weight="normal" fill="#000" textLength="21.01" lengthAdjust="spacingAndGlyphs" stroke="#fff" stroke-width="2" paint-order="stroke" stroke-linejoin="round">3,35</text>
<text x="773.00" y="357.7" font-size="11.5" font-weight="normal" fill="#000" textLength="21.01" lengthAdjust="spacingAndGlyphs" stroke="#fff" stroke-width="2" paint-order="stroke" stroke-linejoin="round">0,94</text>
<text x="773.00" y="371.7" font-size="11.5" font-weight="normal" fill="#000" textLength="21.01" lengthAdjust="spacingAndGlyphs" stroke="#fff" stroke-width="2" paint-order="stroke" stroke-linejoin="round">0,85</text>
<text x="773.00" y="407" font-size="11.5" font-weight="normal" fill="#000" textLength="21.01" lengthAdjust="spacingAndGlyphs" stroke="#fff" stroke-width="2" paint-order="stroke" stroke-linejoin="round">3,80</text>
<text x="773.00" y="443.7" font-size="11.5" font-weight="normal" fill="#000" textLength="21.01" lengthAdjust="spacingAndGlyphs" stroke="#fff" stroke-width="2" paint-order="stroke" stroke-linejoin="round">1,03</text>
<text x="773.00" y="456.6" font-size="11.5" font-weight="normal" fill="#000" textLength="21.01" lengthAdjust="spacingAndGlyphs" stroke="#fff" stroke-width="2" paint-order="stroke" stroke-linejoin="round">0,73</text>
<text x="773.00" y="498" font-size="11.5" font-weight="normal" fill="#000" textLength="21.01" lengthAdjust="spacingAndGlyphs" stroke="#fff" stroke-width="2" paint-order="stroke" stroke-linejoin="round">4,83</text>
<text x="813.60" y="261.3" font-size="11.5" font-weight="normal" fill="#7a4535" textLength="20.00" lengthAdjust="spacingAndGlyphs" stroke="#fff" stroke-width="2" paint-order="stroke" stroke-linejoin="round">NSF</text>
<text x="813.60" y="276.4" font-size="11.5" font-weight="normal" fill="#3535b0" textLength="24.95" lengthAdjust="spacingAndGlyphs" stroke="#fff" stroke-width="2" paint-order="stroke" stroke-linejoin="round">GWT</text>
<text x="813.60" y="306.4" font-size="11.5" font-weight="normal" fill="#7a4535" textLength="18.49" lengthAdjust="spacingAndGlyphs" stroke="#fff" stroke-width="2" paint-order="stroke" stroke-linejoin="round">PSF</text>
<g shape-rendering="crispEdges">
<rect x="819" y="225" width="32" height="1" fill="#6e3535" />
<rect x="819" y="241" width="36" height="1" fill="#6e3535" />
<rect x="850" y="231" width="1" height="11" fill="#6e3535" />
</g>
<path d="M846.5 237.5 L854.5 245.5 M846.5 221.5 L851.5 226.5" stroke="#6e3535" stroke-width="1" fill="none"/>
<text x="838.00" y="229.6" font-size="11.5" font-weight="normal" fill="#7a4535" textLength="23.01" lengthAdjust="spacingAndGlyphs" stroke="#fff" stroke-width="2" paint-order="stroke" stroke-linejoin="round">1,10</text>
<text x="931.30" y="124.7" font-size="12" font-weight="bold" fill="#0000ff" textLength="207.98" lengthAdjust="spacingAndGlyphs" >Load settlement curve, Limit state 1B</text>
<g shape-rendering="crispEdges">
<rect x="931" y="126" width="209" height="1" fill="#0000ff" />
<rect x="931" y="143" width="807" height="1" fill="#000" />
<rect x="931" y="143" width="1" height="479" fill="#000" />
</g>
<path d="M1092 145 V622 M1253 145 V622 M1415 145 V622 M1576 145 V622 M1737 145 V622" stroke="#000" stroke-width="2" stroke-dasharray="2,2" fill="none" shape-rendering="crispEdges"/>
<path d="M933 239 H1738 M933 334 H1738 M933 430 H1738 M933 525 H1738 M933 621 H1738" stroke="#000" stroke-width="2" stroke-dasharray="2,2" fill="none" shape-rendering="crispEdges"/>
<text x="920.00" y="140" font-size="12" font-weight="normal" fill="#0000ff" textLength="21.44" lengthAdjust="spacingAndGlyphs" >(0,0)</text>
<text x="1081.00" y="140" font-size="12" font-weight="normal" fill="#0000ff" textLength="20.98" lengthAdjust="spacingAndGlyphs" >98,8</text>
<text x="1239.60" y="140" font-size="12" font-weight="normal" fill="#0000ff" textLength="26.63" lengthAdjust="spacingAndGlyphs" >197,6</text>
<text x="1401.00" y="140" font-size="12" font-weight="normal" fill="#0000ff" textLength="27.03" lengthAdjust="spacingAndGlyphs" >296,4</text>
<text x="1562.20" y="140" font-size="12" font-weight="normal" fill="#0000ff" textLength="27.03" lengthAdjust="spacingAndGlyphs" >395,2</text>
<text x="1723.00" y="140" font-size="12" font-weight="normal" fill="#0000ff" textLength="25.52" lengthAdjust="spacingAndGlyphs" >494,1</text>
<text x="1738.10" y="154.7" font-size="12" font-weight="normal" fill="#0000ff" textLength="30.24" lengthAdjust="spacingAndGlyphs" >Q[kN]</text>
<text x="909.60" y="243.6" font-size="12" font-weight="normal" fill="#0000ff" textLength="20.98" lengthAdjust="spacingAndGlyphs" >22,0</text>
<text x="909.60" y="338.6" font-size="12" font-weight="normal" fill="#0000ff" textLength="20.98" lengthAdjust="spacingAndGlyphs" >44,0</text>
<text x="909.60" y="434.6" font-size="12" font-weight="normal" fill="#0000ff" textLength="20.98" lengthAdjust="spacingAndGlyphs" >66,0</text>
<text x="909.60" y="529.6" font-size="12" font-weight="normal" fill="#0000ff" textLength="20.98" lengthAdjust="spacingAndGlyphs" >88,0</text>
<text x="904.80" y="625.6" font-size="12" font-weight="normal" fill="#0000ff" textLength="25.81" lengthAdjust="spacingAndGlyphs" >110,0</text>
<text x="931.20" y="632.8" font-size="12" font-weight="normal" fill="#0000ff" textLength="33.84" lengthAdjust="spacingAndGlyphs" >s[mm]</text>
<rect x="913" y="372" width="2" height="2" fill="#0000ff" />
<polyline points="931,144.5 1012,145 1092,145.5 1125,147 1188,149 1253,150.5 1280,152.3 1324,154.5 1365,156.6 1415,159.7 1455,163.9 1500,169 1534,177 1570,185 1590,188.8 1604,191.4 1622,205.2 1643,239 1657,261 1678.5,298 1687,334 1708,416 1710,430 1722.5,525 1736.5,621" fill="none" stroke="#000080" stroke-width="2" stroke-linejoin="round" shape-rendering="crispEdges"/>
<rect x="1783" y="107" width="127" height="20" fill="#d0d0d0" />
<text x="1786.50" y="121" font-size="12" font-weight="normal" fill="#000" textLength="38.04" lengthAdjust="spacingAndGlyphs" >Frames</text>
<rect x="1896" y="119" width="6" height="2" fill="#000" />
<rect x="1787.5" y="394.5" width="118" height="21" fill="#cce4f7" stroke="#0a5aa8" stroke-width="1" />
<text x="1810.40" y="146" font-size="12" font-weight="normal" fill="#000" textLength="36.47" lengthAdjust="spacingAndGlyphs" >Project</text>
<text x="1810.40" y="168" font-size="12" font-weight="normal" fill="#000" textLength="41.49" lengthAdjust="spacingAndGlyphs" >Settings</text>
<text x="1810.40" y="197" font-size="12" font-weight="normal" fill="#000" textLength="20.50" lengthAdjust="spacingAndGlyphs" >CPT</text>
<text x="1810.40" y="219" font-size="12" font-weight="normal" fill="#000" textLength="54.46" lengthAdjust="spacingAndGlyphs" >GWT + NSF</text>
<text x="1810.40" y="241" font-size="12" font-weight="normal" fill="#000" textLength="89.00" lengthAdjust="spacingAndGlyphs" >Soil classification</text>
<text x="1810.40" y="263" font-size="12" font-weight="normal" fill="#000" textLength="31.51" lengthAdjust="spacingAndGlyphs" >Profile</text>
<text x="1810.40" y="285" font-size="12" font-weight="normal" fill="#000" textLength="23.51" lengthAdjust="spacingAndGlyphs" >Soils</text>
<text x="1810.40" y="306.5" font-size="12" font-weight="normal" fill="#000" textLength="33.02" lengthAdjust="spacingAndGlyphs" >Assign</text>
<text x="1810.40" y="335.5" font-size="12" font-weight="normal" fill="#000" textLength="67.99" lengthAdjust="spacingAndGlyphs" >Construction</text>
<text x="1810.40" y="357.5" font-size="12" font-weight="normal" fill="#000" textLength="51.56" lengthAdjust="spacingAndGlyphs" >Geometry</text>
<text x="1810.40" y="386.5" font-size="12" font-weight="normal" fill="#000" textLength="86.97" lengthAdjust="spacingAndGlyphs" >Bearing capacity</text>
<text x="1810.40" y="408.7" font-size="12" font-weight="normal" fill="#000" textLength="57.99" lengthAdjust="spacingAndGlyphs" >Settlement</text>
<rect x="1787" y="178" width="119" height="1" fill="#a0a0a0" />
<rect x="1787" y="317" width="119" height="1" fill="#a0a0a0" />
<rect x="1787" y="368" width="119" height="1" fill="#a0a0a0" />
<rect x="1793.5" y="135.5" width="11" height="13" fill="#fff" stroke="#111"/><path d="M1795 138.5 H1803 M1795 140.5 H1803 M1795 142.5 H1803 M1795 144.5 H1803 M1795 146.5 H1803" stroke="#111" stroke-width="1"/>
<polygon points="1803.59,162.27 1805.96,162.59 1805.96,165.41 1803.59,165.73 1803.46,166.02 1804.92,167.92 1802.92,169.92 1801.02,168.46 1800.73,168.59 1800.41,170.96 1797.59,170.96 1797.27,168.59 1796.98,168.46 1795.08,169.92 1793.08,167.92 1794.54,166.02 1794.41,165.73 1792.04,165.41 1792.04,162.59 1794.41,162.27 1794.54,161.98 1793.08,160.08 1795.08,158.08 1796.98,159.54 1797.27,159.41 1797.59,157.04 1800.41,157.04 1800.73,159.41 1801.02,159.54 1802.92,158.08 1804.92,160.08 1803.46,161.98" fill="#111"/><circle cx="1799" cy="164" r="2.5" fill="#ff0"/>
<path d="M1796.5 186 V201.5 H1805 L1797 186 Z" fill="#e020e0" stroke="#111" stroke-width="1"/><path d="M1798 193.5 H1801 M1798 196.5 H1803 M1798 199.5 H1804" stroke="#111" stroke-width="0.8"/>
<rect x="1791.5" y="210.5" width="3" height="11" fill="#808080" stroke="#111" stroke-width="1"/><rect x="1795" y="212" width="11" height="10" fill="#00f0f0"/><rect x="1795" y="210" width="11" height="1" fill="#900"/><path d="M1796 213h2v2h-2z M1799 213h2v2h-2z M1802 213h2v2h-2z" fill="#00f" shape-rendering="crispEdges"/>
<path d="M1792 230 H1794 V232 H1796 V233 H1795 V235 H1797 V236 H1796 V238 H1798 V239 H1797 V241 H1794 V244 H1792 Z" fill="#ff0" stroke="#f00" stroke-width="1" shape-rendering="crispEdges"/><rect x="1801.5" y="230.5" width="4" height="13" fill="#0ee" stroke="#f00" stroke-width="1" shape-rendering="crispEdges"/><rect x="1802" y="231" width="3" height="3" fill="#088"/><rect x="1802" y="234" width="3" height="2" fill="#ff0"/>
<rect x="1793.5" y="252.5" width="10" height="13" fill="#fff" stroke="#111"/><path d="M1794 256.5 H1803 M1794 261.5 H1803" stroke="#111"/>
<rect x="1794" y="275" width="11" height="14" fill="#909090"/><rect x="1793.5" y="274.5" width="10" height="13" fill="#ff0" stroke="#111"/><clipPath id="sc"><rect x="1794" y="275" width="9" height="12"/></clipPath><path clip-path="url(#sc)" d="M1790 281 L1798 273 M1790 285 L1802 273 M1791 288 L1806 273 M1795 288 L1806 277 M1799 288 L1806 281" stroke="#111" stroke-width="1.3"/>
<rect x="1793.5" y="296.5" width="10" height="13" fill="#111" stroke="#111"/><path d="M1795 298.5 q1 -1.5 2 0 q1 1.5 2 0 q1 -1.5 2 0 q1 1.5 1 0" fill="none" stroke="#0aa" stroke-width="1.3"/><path d="M1795 302h2v1.5h-2z M1798 302h2v1.5h-2z M1800.5 302h1.5v1.5h-1.5z M1795 304.5h7v1.5h-7z" fill="#ff0"/><path d="M1795 307.5 q1 -1.5 2 0 q1 1.5 2 0 q1 -1.5 2 0 q1 1.5 1 0" fill="none" stroke="#0ff" stroke-width="1.6"/>
<rect x="1792.5" y="325.5" width="13" height="13" fill="#fff" stroke="#111"/><circle cx="1796" cy="329" r="1.6" fill="#f0f" stroke="#111" stroke-width="0.7"/><circle cx="1802" cy="329" r="1.6" fill="#f0f" stroke="#111" stroke-width="0.7"/><circle cx="1796" cy="335" r="1.6" fill="#f0f" stroke="#111" stroke-width="0.7"/><circle cx="1802" cy="335" r="1.6" fill="#f0f" stroke="#111" stroke-width="0.7"/>
<rect x="1795.5" y="348.5" width="5" height="11" fill="#e020e0" stroke="#111"/><path d="M1793 351.5 H1803" stroke="#111"/>
<rect x="1795.5" y="383.5" width="6" height="7" fill="#ff0" stroke="#111"/><path d="M1794.5 380.5 L1798.5 384.5 L1802.5 380.5" fill="none" stroke="#111" stroke-width="1"/><path d="M1798.5 375 V381" stroke="#e00" stroke-width="1.6"/><path d="M1795.5 380 L1798.5 383.5 L1801.5 380 Z" fill="#e00"/>
<rect x="1792.5" y="398.5" width="14" height="14" fill="#fff" stroke="#111"/><path d="M1795 401h1v1h-1z M1795 404h1v1h-1z M1795 407h1v1h-1z M1795 410h1v1h-1z M1798 401h1v1h-1z M1798 404h1v1h-1z M1798 407h1v1h-1z M1798 410h1v1h-1z M1801 401h1v1h-1z M1801 404h1v1h-1z M1801 407h1v1h-1z M1801 410h1v1h-1z M1804 401h1v1h-1z M1804 404h1v1h-1z M1804 407h1v1h-1z M1804 410h1v1h-1z" fill="#111" shape-rendering="crispEdges"/><path d="M1793.5 399.5 Q1803 402 1806 412" fill="none" stroke="#e00" stroke-width="1.6"/>
<rect x="1783" y="816" width="127" height="20" fill="#d0d0d0" />
<text x="1786.50" y="830" font-size="12" font-weight="normal" fill="#000" textLength="42.52" lengthAdjust="spacingAndGlyphs" >Outputs</text>
<rect x="1896" y="828" width="6" height="2" fill="#000" />
<rect x="1787.5" y="840.5" width="118" height="22" fill="#e1e1e1" stroke="#adadad" stroke-width="1" />
<g shape-rendering="crispEdges"><rect x="1791.5" y="843.5" width="15" height="15" fill="#ececec" stroke="#606060"/><rect x="1794.5" y="846.5" width="2" height="3" fill="#fff" stroke="#111"/><rect x="1794.5" y="849.5" width="3" height="3" fill="#fff" stroke="#111"/><rect x="1794.5" y="852.5" width="5" height="3" fill="#fff" stroke="#111"/><rect x="1801" y="845" width="2" height="6" fill="#090"/><rect x="1799" y="847" width="6" height="2" fill="#090"/></g>
<text x="1810.30" y="854.6" font-size="12" font-weight="normal" fill="#000" textLength="61.95" lengthAdjust="spacingAndGlyphs" >Add picture</text>
<text x="1787.00" y="876.6" font-size="12" font-weight="normal" fill="#000" textLength="62.03" lengthAdjust="spacingAndGlyphs" >Settlement :</text>
<text x="1900.00" y="876.6" font-size="12" font-weight="normal" fill="#000" textLength="6.04" lengthAdjust="spacingAndGlyphs" >0</text>
<text x="1787.00" y="894.6" font-size="12" font-weight="normal" fill="#000" textLength="31.52" lengthAdjust="spacingAndGlyphs" >Total :</text>
<text x="1900.00" y="894.6" font-size="12" font-weight="normal" fill="#000" textLength="6.04" lengthAdjust="spacingAndGlyphs" >0</text>
<rect x="1787.5" y="901.5" width="118" height="22" fill="#e1e1e1" stroke="#adadad" stroke-width="1" />
<g shape-rendering="crispEdges"><rect x="1791.5" y="904.5" width="15" height="15" fill="#ececec" stroke="#606060"/><rect x="1794.5" y="907.5" width="2" height="3" fill="#fff" stroke="#111"/><rect x="1794.5" y="910.5" width="3" height="3" fill="#fff" stroke="#111"/><rect x="1794.5" y="913.5" width="5" height="3" fill="#fff" stroke="#111"/><path d="M1799 907h1v1h-1z M1801 907h3v1h-3z M1799 909h1v1h-1z M1801 909h3v1h-3z M1800 911h1v1h-1z M1802 911h2v1h-2z" fill="#111"/></g>
<text x="1810.30" y="915.5" font-size="12" font-weight="normal" fill="#000" textLength="76.99" lengthAdjust="spacingAndGlyphs" >List of pictures</text>
<rect x="1787" y="929" width="119" height="1" fill="#a0a0a0" />
<rect x="1787.5" y="936.5" width="56" height="41" fill="#e1e1e1" stroke="#adadad" stroke-width="1" />
<rect x="1849.5" y="936.5" width="56" height="41" fill="#e1e1e1" stroke="#adadad" stroke-width="1" />
<g transform="translate(1804,943)"><rect x="2.5" y="2.5" width="19" height="5" fill="#d2b98a" stroke="#111" stroke-width="1"/><rect x="4.6" y="0.6" width="14.8" height="6" rx="0.8" fill="#fff" stroke="#111" stroke-width="1.2"/><rect x="0.6" y="6.6" width="22.8" height="12.4" rx="1.3" fill="#d2b98a" stroke="#111" stroke-width="1.2"/><circle cx="2.6" cy="9" r="0.7" fill="#111"/><path d="M20 9 H22" stroke="#111" stroke-width="1"/><rect x="3.6" y="11.6" width="16.8" height="4" fill="#a8a8a8" stroke="#222" stroke-width="1.2"/><path d="M5 12.8 h2 M8.5 12.8 h2 M12 12.8 h2 M15.5 12.8 h2" stroke="#333" stroke-width="1"/><rect x="4.6" y="15.6" width="14.8" height="13.4" rx="0.6" fill="#fff" stroke="#111" stroke-width="1.2"/><path d="M6 18h12v1h-12z M6 20h12v1h-12z M7 22h1v1h-1z M9 22h9v1h-9z M6 24h2v1h-2z M9 24h9v1h-9z M10 26h1v1h-1z M12 26h2v1h-2z M15 26h3v1h-3z" fill="#111" shape-rendering="crispEdges"/></g>
<g transform="translate(1866,943)"><rect x="2.5" y="2.5" width="19" height="5" fill="#d2b98a" stroke="#111" stroke-width="1"/><rect x="4.6" y="0.6" width="14.8" height="6" rx="0.8" fill="#fff" stroke="#111" stroke-width="1.2"/><rect x="0.6" y="6.6" width="22.8" height="12.4" rx="1.3" fill="#d2b98a" stroke="#111" stroke-width="1.2"/><circle cx="2.6" cy="9" r="0.7" fill="#111"/><path d="M20 9 H22" stroke="#111" stroke-width="1"/><rect x="3.6" y="11.6" width="16.8" height="4" fill="#a8a8a8" stroke="#222" stroke-width="1.2"/><path d="M5 12.8 h2 M8.5 12.8 h2 M12 12.8 h2 M15.5 12.8 h2" stroke="#333" stroke-width="1"/><rect x="4.6" y="15.6" width="14.8" height="13.4" rx="0.6" fill="#fff" stroke="#111" stroke-width="1.2"/><path d="M7.5 18.5 H6.7 V26.3 H7.5" fill="none" stroke="#f00" stroke-width="1.2"/><path d="M9.7 18.9 H16.6 V26.2 H14.8 V24.4 H13 V22.4 H11.2 V20.4 H9.7 Z M11.2 20.4 H16.6 M13 22.4 H16.6 M14.8 24.4 H16.6" fill="none" stroke="#f00" stroke-width="1.1"/></g>
<rect x="1787.5" y="981.5" width="118" height="21" fill="#e1e1e1" stroke="#adadad" stroke-width="1" />
<g shape-rendering="crispEdges"><rect x="1791.5" y="984.5" width="9" height="10" fill="#ececec" stroke="#606060"/><rect x="1794.5" y="986.5" width="2" height="3" fill="#fff" stroke="#111"/><rect x="1794.5" y="989.5" width="3" height="3" fill="#fff" stroke="#111"/><rect x="1794.5" y="992.5" width="5" height="3" fill="#fff" stroke="#111"/><path d="M1801 988h2v1h-2z M1802 989h1v3h-1z M1801 991h3v1h-3z M1802 992h1v1h-1z" fill="#090"/><rect x="1800.5" y="994.5" width="7" height="6" fill="#f0f0f0" stroke="#111"/><rect x="1802" y="997" width="4" height="1" fill="#111"/></g>
<text x="1810.30" y="995.6" font-size="12" font-weight="normal" fill="#000" textLength="53.86" lengthAdjust="spacingAndGlyphs" >Copy view</text>
<rect x="4" y="668" width="20" height="339" fill="#d3d3d3" />
<rect x="15" y="675" width="2" height="6" fill="#000" />
<text transform="translate(18.5,1003.5) rotate(-90)" x="0.00" y="0" font-size="12" fill="#000" textLength="56.49" lengthAdjust="spacingAndGlyphs">Settlement</text>
<rect x="34" y="714" width="11" height="1" fill="#c0c0c0" />
<rect x="88" y="714" width="1529" height="1" fill="#a0a0a0" />
<text x="48.20" y="719" font-size="12" font-weight="normal" fill="#000" textLength="36.81" lengthAdjust="spacingAndGlyphs" >Results</text>
<rect x="34.5" y="730.5" width="1582" height="265" fill="#fff" stroke="#a0a0a0" stroke-width="1" />
<text x="44.50" y="747.7" font-size="12" font-weight="bold" fill="#000" textLength="194.48" lengthAdjust="spacingAndGlyphs" >Pile settlement calculation - results</text>
<text x="44.50" y="762.9" font-size="12" font-weight="bold" fill="#000" textLength="76.06" lengthAdjust="spacingAndGlyphs" >Limit state 1B</text>
<text x="44" y="777.4" font-size="12" fill="#000" textLength="329" lengthAdjust="spacingAndGlyphs">For loading Fs<tspan font-size="9" dy="2">d</tspan><tspan dy="-2"> = 17,57 kN the pile settlement is w</tspan><tspan font-size="9" dy="2">1,d</tspan><tspan dy="-2"> = 0,1 mm</tspan></text>
<text x="44.50" y="793.6" font-size="12" font-weight="bold" fill="#000" textLength="68.02" lengthAdjust="spacingAndGlyphs" >Limit state 2</text>
<text x="44" y="808.7" font-size="12" fill="#000" textLength="323" lengthAdjust="spacingAndGlyphs">For loading Fs = 17,57 kN the pile settlement is w<tspan font-size="9" dy="2">1,d</tspan><tspan dy="-2"> = 0,1 mm</tspan></text>
<rect x="1529.5" y="679.5" width="87" height="21" fill="#e1e1e1" stroke="#adadad" stroke-width="1" />
<g transform="translate(1542,682)"><path d="M0.5 2.5 H6 L8.5 5 V14.5 H0.5 Z" fill="#fff" stroke="#111"/><path d="M2 10h3v1h-3z M2 12h2v1h-2z M5 12h2v1h-2z" fill="#111" shape-rendering="crispEdges"/><circle cx="8.3" cy="5.3" r="3.9" fill="#0ff" stroke="#111" stroke-width="1.2"/><rect x="6" y="4" width="2.5" height="3" fill="#111"/><path d="M10.5 7.5 L14 11" stroke="#111" stroke-width="1.8"/></g>
<text x="1560.00" y="693.8" font-size="12" font-weight="normal" fill="#000" textLength="41.53" lengthAdjust="spacingAndGlyphs" >In detail</text>
<rect x="1560" y="696" width="4" height="1" fill="#000" />
<rect x="1627" y="686" width="11" height="1" fill="#a0a0a0" />
<rect x="1713" y="686" width="53" height="1" fill="#a0a0a0" />
<text x="1641.00" y="690.7" font-size="12" font-weight="bold" fill="#000" textLength="68.71" lengthAdjust="spacingAndGlyphs" >Visualization</text>
<circle cx="1635" cy="711" r="6.3" fill="#fff" stroke="#8a8a8a" stroke-width="1"/>
<circle cx="1635" cy="711" r="3.8" fill="#000"/>
<circle cx="1635" cy="734" r="6.3" fill="#fff" stroke="#8a8a8a" stroke-width="1"/>
<circle cx="1635" cy="764" r="6.3" fill="#fff" stroke="#8a8a8a" stroke-width="1"/>
<circle cx="1635" cy="764" r="3.8" fill="#000"/>
<circle cx="1635" cy="787" r="6.3" fill="#fff" stroke="#8a8a8a" stroke-width="1"/>
<text x="1648.60" y="714.5" font-size="12" font-weight="normal" fill="#000" textLength="70.45" lengthAdjust="spacingAndGlyphs" >Limit state 1B</text>
<text x="1648.60" y="737.8" font-size="12" font-weight="normal" fill="#000" textLength="63.44" lengthAdjust="spacingAndGlyphs" >Limit state 2</text>
<rect x="1627" y="748" width="139" height="1" fill="#a0a0a0" />
<text x="1648.60" y="767.2" font-size="12" font-weight="normal" fill="#000" textLength="116.44" lengthAdjust="spacingAndGlyphs" >Load settlement curve</text>
<text x="1648.60" y="790.5" font-size="12" font-weight="normal" fill="#000" textLength="116.44" lengthAdjust="spacingAndGlyphs" >Load settlement curve</text>
<rect x="1647.5" y="755.5" width="118" height="16" fill="none" stroke="#000" stroke-width="1" stroke-dasharray="1,1" shape-rendering="crispEdges"/>
<rect x="1" y="1010" width="1912" height="1" fill="#d9d9d9" />
<rect x="1909" y="1025" width="2" height="2" fill="#b0b0b0" />
<rect x="1906" y="1028" width="2" height="2" fill="#b0b0b0" />
<rect x="1909" y="1028" width="2" height="2" fill="#b0b0b0" />
<rect x="1903" y="1031" width="2" height="2" fill="#b0b0b0" />
<rect x="1906" y="1031" width="2" height="2" fill="#b0b0b0" />
<rect x="1909" y="1031" width="2" height="2" fill="#b0b0b0" />
</svg>
</body></html>
